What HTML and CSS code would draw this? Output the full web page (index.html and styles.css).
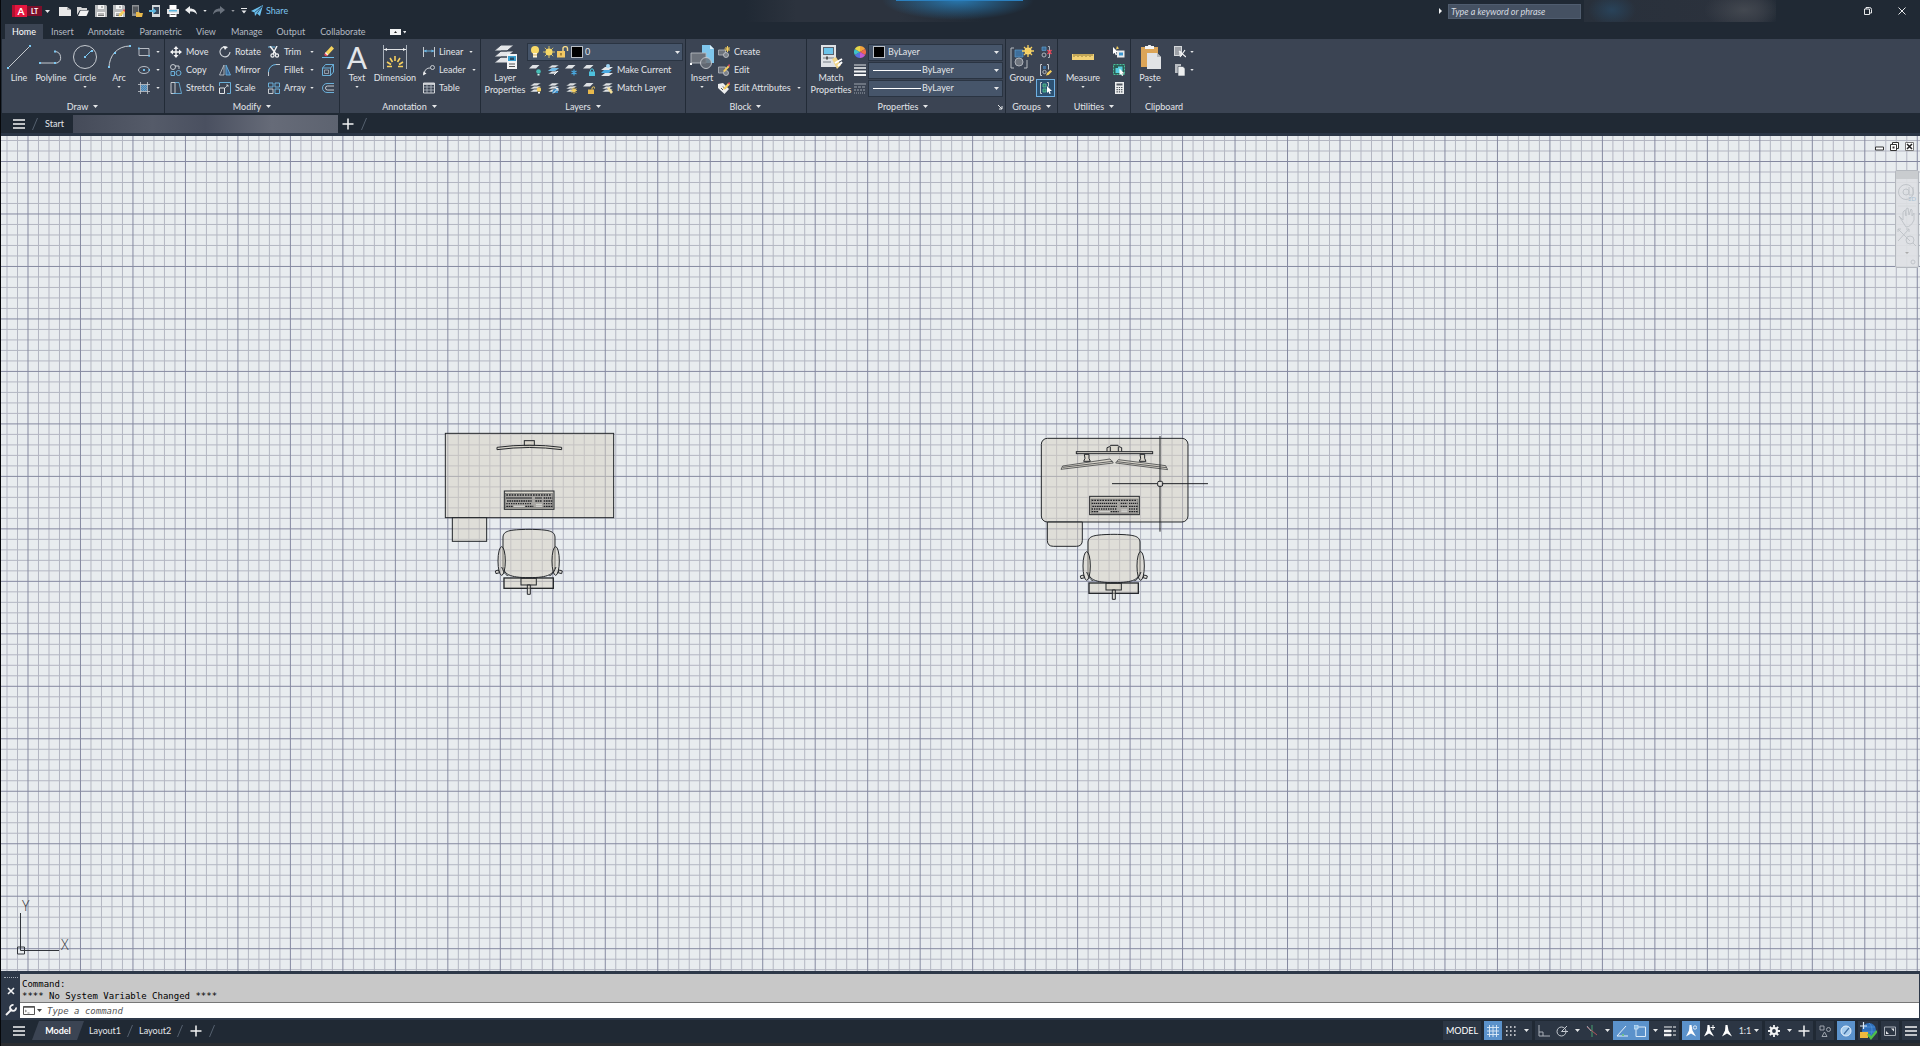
FILE: index.html
```html
<!DOCTYPE html>
<html lang="en">
  <head>
    <title>AutoCAD LT</title>
    <meta charset="utf-8" />
    <meta name="viewport" content="width=device-width" />
    <link rel="stylesheet" href="styles.css">
    <script src="grid.js" defer></script>
  </head>

  <body>
    <!-- icon sprite -->
    <svg class="sprite" aria-hidden="true">
      <symbol id="i-down" viewBox="0 0 5 3"><path d="M0 0h5L2.5 3z" fill="#e6e8ea" /></symbol>
      <symbol id="i-burger" viewBox="0 0 12 12"><path d="M0 2h12M0 6h12M0 10h12" stroke="#f2f3f4" stroke-width="1.6" /></symbol>
      <symbol id="i-plus" viewBox="0 0 12 12"><path d="M6 .5v11M.5 6h11" stroke="#f2f3f4" stroke-width="1.5" /></symbol>
      <symbol id="i-slash" viewBox="0 0 6 12"><path d="M.5 12L5.5 0" stroke="#55606f" /></symbol>

      <symbol id="i-new" viewBox="0 0 12 12"><path d="M0 2h8l4 3v6H0z" fill="#e9e9e9" /><path d="M8 2v3h4z" fill="#aaa" /></symbol>
      <symbol id="i-open" viewBox="0 0 12 12"><path d="M0 10V2h4l1 1h5v2H3z" fill="#d7d7d7" /><path d="M3.500 5.500H12L9.500 11H1z" fill="#f2f2f2" /></symbol>
      <symbol id="i-save" viewBox="0 0 12 12"><path d="M0 0h11l1 1v11H0z" fill="#b9bbbd" /><path d="M3 0h6v4H3zM2 7h8v5H2z" fill="#f4f4f4" /><path d="M7 1v2M3 9h6M3 10.500h6" stroke="#555" stroke-width=".8" /></symbol>
      <symbol id="i-saveas" viewBox="0 0 12 12"><use href="#i-save" /><path d="M5.500 11.500l1-3L10.500 5 12 7 8 11z" fill="#f5cf5f" /><path d="M10 5.500l1-1.500 1 1v2z" fill="#e8485a" /></symbol>
      <symbol id="i-webopen" viewBox="0 0 12 12"><path d="M1 0h7v11H1z" fill="#8d9093" /><path d="M2 1.500h5v7H2z" fill="#55595e" /><path d="M5 7h3l1 1h3l-1 4H5z" fill="#e8b94c" /></symbol>
      <symbol id="i-websave" viewBox="0 0 12 12"><path d="M3 0h8v12H3z" fill="#d4d7d9" /><path d="M4.500 2H10v7H4.500z" fill="#39485a" /><path d="M0 5h4V3l3.500 3L4 9V7H0z" fill="#5cb6dd" /></symbol>
      <symbol id="i-print" viewBox="0 0 12 12"><path d="M2.500 0h7v4h-7z" fill="#fff" /><path d="M0 4h12v5H0z" fill="#e1e3e5" /><path d="M2 5h8v1.500H2z" fill="#5cb6dd" /><path d="M2.500 8h7v4h-7z" fill="#fff" /><path d="M3.500 9.500h5" stroke="#666" /></symbol>
      <symbol id="i-undo" viewBox="0 0 12 12"><path d="M0 5l5-4v2.500c4 0 6.500 2 7 6C10 7 8 6.500 5 6.500V9z" fill="#eceeef" /></symbol>
      <symbol id="i-redo" viewBox="0 0 12 12"><path d="M12 5L7 1v2.500c-4 0-6.500 2-7 6C2 7 4 6.500 7 6.500V9z" fill="#6a727d" /></symbol>
      <symbol id="i-custom" viewBox="0 0 6 6"><path d="M0 .5h6" stroke="#e6e8ea" /><path d="M.5 2.500h5L3 5.500z" fill="#e6e8ea" /></symbol>
      <symbol id="i-plane" viewBox="0 0 12 12"><path d="M0 6L12 0 9 11 6 8.500 4 11 3.500 7.500z" fill="#6cc1ee" /><path d="M3.500 7.500L11 1.500 6 8.500" fill="none" stroke="#25405a" stroke-width=".8" /></symbol>

      <symbol id="i-line" viewBox="0 0 24 24"><path d="M1 23L23 1" stroke="#d5d9de" stroke-width=".9" /><path d="M0 22h2v2H0zM22 0h2v2h-2z" fill="#7cc8f2" /></symbol>
      <symbol id="i-polyline" viewBox="0 0 24 24"><path d="M0 18h18a6 6 0 0 0-2-11.500" fill="none" stroke="#d5d9de" stroke-width=".9" /><path d="M0 17h2v2H0zM15 5.500h2v2h-2zM15 17h2v2h-2z" fill="#7cc8f2" /></symbol>
      <symbol id="i-circle" viewBox="0 0 24 24"><circle cx="12" cy="12" r="11.500" fill="none" stroke="#d5d9de" stroke-width=".9" /><path d="M12 12l7-7" stroke="#7cc8f2" /><path d="M11 11h2v2h-2zM18 5h2v2h-2z" fill="#7cc8f2" /></symbol>
      <symbol id="i-arc" viewBox="0 0 24 24"><path d="M2 23C2 11 10 1 23 1" fill="none" stroke="#d5d9de" stroke-width=".9" /><path d="M1 21h2v2H1zM7 7h2v2H7zM22 0h2v2h-2z" fill="#7cc8f2" /></symbol>
      <symbol id="i-rect" viewBox="0 0 12 12"><path d="M1 2.500h10v7H1z" fill="none" stroke="#c5cad1" stroke-width=".9" /><path d="M0 1.500h1.700v1.700H0zM10.300 9h1.700v1.700h-1.700z" fill="#6fbbe8" /></symbol>
      <symbol id="i-ellipse" viewBox="0 0 12 12"><ellipse cx="6" cy="6" rx="5.500" ry="3.500" fill="none" stroke="#c5cad1" stroke-width=".9" /><path d="M5 5h2v2H5zM10.500 5H12v2h-1.500z" fill="#6fbbe8" /></symbol>
      <symbol id="i-hatch" viewBox="0 0 12 12"><path d="M3 3h6v6H3z" fill="#4d7ea8" /><path d="M3 5l2-2M3 7l4-4M3 9l6-6M5 9l4-4M7 9l2-2" stroke="#8bc8ee" stroke-width=".5" /><path d="M2.500 0v12M9.500 0v12M0 2.500h12M0 9.500h12" stroke="#c5cad1" stroke-width=".8" /></symbol>

      <symbol id="i-move" viewBox="0 0 12 12"><path d="M6 1v10M1 6h10" stroke="#f2f3f4" stroke-width="1.400" /><path d="M3.500 3L6 0l2.500 3zM3.500 9L6 12l2.500-3zM3 3.500L0 6l3 2.500zM9 3.500L12 6 9 8.500z" fill="#f2f3f4" /></symbol>
      <symbol id="i-copy" viewBox="0 0 12 12"><g fill="none" stroke="#d5d9de" stroke-width=".9"><circle cx="3" cy="3" r="2.500" /><path d="M5 2h4v3" /><path d="M1 7.500h3.500v4H1z" stroke="#6fbbe8" /><circle cx="8.500" cy="9" r="2.500" stroke="#6fbbe8" /></g></symbol>
      <symbol id="i-stretch" viewBox="0 0 12 12"><path d="M1 .5h4v11H1z" fill="none" stroke="#d5d9de" stroke-width=".9" /><path d="M5 .5h4l2.500 11H3" fill="none" stroke="#6fbbe8" stroke-width=".8" /></symbol>
      <symbol id="i-rotate" viewBox="0 0 12 12"><path d="M8.500 1.500A5 5 0 1 0 11 6" fill="none" stroke="#d5d9de" stroke-width="1.100" /><path d="M4 0l4.500 1L6 4z" fill="#f2f3f4" /></symbol>
      <symbol id="i-mirror" viewBox="0 0 12 12"><path d="M5 1v10H.5z" fill="none" stroke="#b8bfc8" stroke-width=".9" /><path d="M7 1v10h4.500z" fill="#39679a" stroke="#6fbbe8" stroke-width=".8" /></symbol>
      <symbol id="i-scale" viewBox="0 0 12 12"><path d="M.5 6h5v5.500h-5z" fill="none" stroke="#e3e5e8" /><path d="M.5 4V.5h11v11H8" fill="none" stroke="#6fbbe8" stroke-width=".9" /><path d="M6 6l3-3M9 5V3H7" fill="none" stroke="#e3e5e8" stroke-width=".7" /></symbol>
      <symbol id="i-trim" viewBox="0 0 12 12"><path d="M0 1h7" stroke="#6fbbe8" /><path d="M2 0l6 8M9 0L5 8" stroke="#f2f3f4" stroke-width="1.500" /><g fill="none" stroke="#f2f3f4" stroke-width="1.200"><circle cx="4.500" cy="9.500" r="1.600" /><circle cx="9" cy="9.500" r="1.600" /></g></symbol>
      <symbol id="i-fillet" viewBox="0 0 12 12"><path d="M.5 12V8M8 .5h4" stroke="#d5d9de" stroke-width=".9" /><path d="M.5 8A7.500 7.500 0 0 1 8 .5" fill="none" stroke="#6fbbe8" /></symbol>
      <symbol id="i-array" viewBox="0 0 12 12"><g fill="none" stroke="#6fbbe8" stroke-width=".9"><path d="M.5 1h4.500v4H.5zM7 1h4.500v4H7z" /><path d="M7 7h4.500v4.500H7z" /></g><path d="M.5 7H5v4.500H.5z" fill="none" stroke="#d5d9de" stroke-width=".9" /></symbol>
      <symbol id="i-erase" viewBox="0 0 12 12"><path d="M0 11.500h12" stroke="#6fbbe8" /><path d="M3.500 6.500L9.500 0 12 2.500 6 9z" fill="#f5d35d" /><path d="M3.500 6.500L6 9l-1 1c-1 1-3.500-1-2.500-2.300z" fill="#e8485a" /><path d="M3.300 6.700l2.500 2.500" stroke="#fff" stroke-width="1.200" /></symbol>
      <symbol id="i-explode" viewBox="0 0 12 12"><path d="M.5 4h8v7.500h-8zM.5 4L3.500.5h8V8l-3 3.500M8.500 4l3-3.500" fill="none" stroke="#6fbbe8" stroke-width=".9" /><path d="M2.500 6h4v3.500h-4z" fill="none" stroke="#b8bfc8" stroke-width=".7" /></symbol>
      <symbol id="i-offset" viewBox="0 0 12 12"><path d="M12 1.500H5a4.500 4.500 0 0 0 0 9h7" fill="none" stroke="#6fbbe8" stroke-width=".9" /><path d="M12 4H5.500a2 2 0 0 0 0 4H12" fill="none" stroke="#d5d9de" stroke-width=".9" /></symbol>

      <symbol id="i-dim" viewBox="0 0 24 24"><path d="M.5 0v24M23.500 0v24" stroke="#b8bfc8" stroke-width=".9" /><path d="M1 4.500h22" stroke="#f2f3f4" stroke-width=".9" /><path d="M1 4.500L4 3v3zM23 4.500L20 3v3z" fill="#f2f3f4" /><path d="M12 11v5M7 13l2.500 4M17 13l-2.500 4M4 17l4 2.500M20 17l-4 2.500M4 21.500h5M15 21.500h5" stroke="#f5cf5f" stroke-width="1.600" /></symbol>
      <symbol id="i-linear" viewBox="0 0 12 12"><path d="M.5 1v10M11.500 1v10" stroke="#d5d9de" stroke-width=".9" /><path d="M1 5h10" stroke="#6fbbe8" stroke-width=".9" /><path d="M1 5l2.500-1.500v3zM11 5L8.500 3.500v3z" fill="#6fbbe8" /></symbol>
      <symbol id="i-leader" viewBox="0 0 12 12"><path d="M1 10c1-5 3-6 6.500-6" fill="none" stroke="#d5d9de" /><circle cx="9.500" cy="3.500" r="2" fill="none" stroke="#d5d9de" stroke-width=".9" /><path d="M0 11.500l.5-4 3 2z" fill="#f2f3f4" /></symbol>
      <symbol id="i-table" viewBox="0 0 12 12"><path d="M.5 1h11v10H.5z" fill="none" stroke="#e3e5e8" stroke-width=".9" /><path d="M.5 2h11" stroke="#e3e5e8" stroke-width="1.600" /><path d="M.5 5h11M.5 8h11M4 2v9M8 2v9" stroke="#b8bfc8" stroke-width=".8" /></symbol>

      <symbol id="i-stack" viewBox="0 0 12 12"><path d="M5 1h7L8 4H1zM5 4h7L8 7H1zM5 7h7l-4 3H1z" fill="#dfe2e5" stroke="#3b4453" stroke-width=".5" /></symbol>
      <symbol id="i-one" viewBox="0 0 12 12"><path d="M3.500 1h7L7 4.500H0z" fill="#dfe2e5" /></symbol>
      <symbol id="i-layerprops" viewBox="0 0 24 24"><path d="M8 0h13l-7 6H1zM8 6h13l-7 6H1zM8 12h13l-7 6H1z" fill="#e3e5e8" stroke="#3b4453" /><path d="M14 9h10v15H14z" fill="#f2f3f4" /><path d="M15 11h8v5h-8z" fill="#3aa0cf" /><path d="M17 12.500h4v2.500h-4z" fill="#274b66" /><path d="M16 19h6M16 21.500h6" stroke="#555" /></symbol>
      <symbol id="i-l1" viewBox="0 0 12 12"><use href="#i-one" /><circle cx="9.500" cy="7.500" r="2.300" fill="#48c0b8" /><path d="M8.500 10h2v1.500h-2z" fill="#d5f3ef" /></symbol>
      <symbol id="i-l2" viewBox="0 0 12 12"><use href="#i-stack" /><path d="M5 4h7L8 7H1z" fill="#6fbbe8" /><path d="M7 11l4-4" stroke="#f2f3f4" /></symbol>
      <symbol id="i-l3" viewBox="0 0 12 12"><use href="#i-one" /><path d="M9 5.500v6M6.500 7l5 3M11.500 7l-5 3" stroke="#4aa9e0" stroke-width="1.200" /></symbol>
      <symbol id="i-l4" viewBox="0 0 12 12"><use href="#i-one" /><path d="M6 7.500h6V12H6z" fill="#4ec0dc" /><path d="M7.500 7.500V6c0-1.500 3-1.500 3 0v1.500" fill="none" stroke="#4ec0dc" /></symbol>
      <symbol id="i-l5" viewBox="0 0 12 12"><use href="#i-stack" /><circle cx="10" cy="7.500" r="2.200" fill="#f5cf5f" /><path d="M9 10h2v1.500H9z" fill="#fff" /></symbol>
      <symbol id="i-l6" viewBox="0 0 12 12"><use href="#i-stack" /><path d="M6 8l5-3v6H5z" fill="#3d8fc9" /><path d="M6 11.500l5-5M11 9V6.500H8.500" fill="none" stroke="#f2f3f4" /></symbol>
      <symbol id="i-l7" viewBox="0 0 12 12"><use href="#i-stack" /><circle cx="9" cy="8.500" r="1.800" fill="#f5cf5f" /><path d="M9 5v7M5.500 8.500h7M6.500 6l5 5M11.500 6l-5 5" stroke="#f5cf5f" stroke-width=".8" /></symbol>
      <symbol id="i-l8" viewBox="0 0 12 12"><use href="#i-one" /><path d="M5 7.500h6V12H5z" fill="#e8b94c" /><path d="M9 7.500V6c0-1.500 3-1.500 3 0v1" fill="none" stroke="#f5cf5f" /></symbol>
      <symbol id="i-makecur" viewBox="0 0 12 12"><path d="M4 3h8L8 6H0zM4 9h8l-4 3H0z" fill="#e3e5e8" /><path d="M3 6h8l-3 3H0z" fill="#4aa9e0" /><circle cx="7" cy="2" r="2" fill="#9ed4f4" /></symbol>
      <symbol id="i-matchlay" viewBox="0 0 12 12"><use href="#i-stack" /><path d="M6 6.500l2-1.500 4 5-2 2z" fill="#f3df9c" /></symbol>
      <symbol id="i-bulb" viewBox="0 0 12 12"><circle cx="6" cy="4" r="4" fill="#f8d968" /><path d="M4 7h4v4.500H4z" fill="#fdf6dc" /><path d="M4 9h4" stroke="#b98b2a" stroke-width=".7" /></symbol>
      <symbol id="i-sun" viewBox="0 0 12 12"><circle cx="6" cy="6" r="3.500" fill="#f8d968" /><path d="M6 0v12M0 6h12M1.800 1.800l8.400 8.400M10.200 1.800l-8.400 8.400" stroke="#f8d968" stroke-width=".8" /></symbol>
      <symbol id="i-unlock" viewBox="0 0 12 12"><path d="M0 5h8v6.500H0z" fill="#f2c864" /><path d="M6 5V2.500c0-2.500 4.500-2.500 4.500 0V5" fill="none" stroke="#f5d98a" stroke-width="1.400" /><path d="M4 7v2.500" stroke="#5a4310" /></symbol>

      <symbol id="i-insert" viewBox="0 0 24 24"><path d="M12 0h8l4 4v14H12z" fill="#7fc6ec" /><path d="M20 0v4h4z" fill="#d9f0fb" /><path d="M1 8h15v10H1z" fill="#6c727b" stroke="#b6bac0" stroke-width=".9" /><circle cx="16" cy="18" r="5.500" fill="#6c727b" fill-opacity=".8" stroke="#c6cacf" stroke-width=".9" /><path d="M0 18h2v2H0z" fill="#fff" /></symbol>
      <symbol id="i-create" viewBox="0 0 12 12"><path d="M.5 4h7v5h-7z" fill="#6c727b" stroke="#b6bac0" stroke-width=".8" /><circle cx="8" cy="9" r="2.500" fill="#7b8189" stroke="#c6cacf" stroke-width=".8" /><path d="M9.500 0v6M6.500 3h6M7.500 1l4 4M11.500 1l-4 4" stroke="#f5cf5f" stroke-width="1" /></symbol>
      <symbol id="i-edit" viewBox="0 0 12 12"><path d="M.5 3h7v6h-7z" fill="#6c727b" stroke="#b6bac0" stroke-width=".8" /><circle cx="8" cy="9" r="2.500" fill="#7b8189" stroke="#c6cacf" stroke-width=".8" /><path d="M5 7l5-5.500 1.500 1.500-5 5z" fill="#f5cf5f" /><path d="M10 1.500L11 0l1 1-.5 2z" fill="#e8485a" /></symbol>
      <symbol id="i-attr" viewBox="0 0 12 12"><path d="M0 2l5-1 6 6-4.500 5L0 6z" fill="#eceeef" /><path d="M3 6l2 2M5 4.500l2.500 2.500" stroke="#555" /><path d="M5 7l5-6 2 1.500-5 5z" fill="#f5cf5f" /><path d="M10 1.500L11 0l1 1-.5 2z" fill="#e8485a" /></symbol>

      <symbol id="i-matchprop" viewBox="0 0 24 24"><path d="M2 0h15v22H2z" fill="#dfe2e5" /><path d="M4 2h11v8H4z" fill="#5a6370" /><path d="M5 3h9v6H5z" fill="#6cc4ea" /><path d="M4 13h11M4 17h8" stroke="#777d85" stroke-width="1.200" /><path d="M7 11.500h2v3H7z" fill="#555" /><path d="M13 14l4-2 5 8-4 4z" fill="#f1d68a" /><path d="M16 18l7-4M19 21l4-4" stroke="#fff" stroke-width="2" /></symbol>
      <symbol id="i-wheel" viewBox="0 0 12 12"><path d="M6 6V0a6 6 0 0 1 5.200 3z" fill="#f3a33c" /><path d="M6 6l5.200-3a6 6 0 0 1 0 6z" fill="#f06a4a" /><path d="M6 6l5.200 3A6 6 0 0 1 6 12z" fill="#c25ad2" /><path d="M6 6v6A6 6 0 0 1 .8 9z" fill="#5a6fe0" /><path d="M6 6L.8 9a6 6 0 0 1 0-6z" fill="#3fc1c9" /><path d="M6 6L.8 3A6 6 0 0 1 6 0z" fill="#e8d84a" /></symbol>
      <symbol id="i-weight" viewBox="0 0 12 12"><path d="M0 1h12" stroke="#f2f3f4" stroke-width=".9" /><path d="M0 4h12" stroke="#f2f3f4" stroke-width="1.500" /><path d="M0 7.500h12" stroke="#f2f3f4" stroke-width="2" /><path d="M0 11h12" stroke="#f2f3f4" stroke-width="2" /></symbol>
      <symbol id="i-ltype" viewBox="0 0 12 12"><g stroke="#a9b0b9" stroke-width=".9"><path d="M0 2h12" /><path d="M0 5h12" stroke-dasharray="3 1" /><path d="M0 8h12" stroke-dasharray="2 1" /><path d="M0 11h12" stroke-dasharray="1 1" /></g></symbol>
      <symbol id="i-launch" viewBox="0 0 6 6"><path d="M1 1l4 4M5 2v3H2" fill="none" stroke="#e6e8ea" /></symbol>

      <symbol id="i-group" viewBox="0 0 24 24"><path d="M4 3H1v20h3M14 23h3v-8" fill="none" stroke="#b6bac0" /><path d="M5 5h8v7H5z" fill="#3f6f9c" stroke="#5a9ccc" stroke-width=".7" /><circle cx="9" cy="17" r="4" fill="#70767f" stroke="#aeb3ba" /><circle cx="18" cy="6" r="3.500" fill="#fbe08a" /><path d="M18 0v12M12 6h12M14 2l8 8M22 2l-8 8" stroke="#f5cf5f" stroke-width="1.300" /></symbol>
      <symbol id="i-ungroup" viewBox="0 0 12 12"><path d="M2 1h4v3.500H2z" fill="#3f6f9c" stroke="#5a9ccc" stroke-width=".7" /><circle cx="4" cy="9" r="2" fill="none" stroke="#aeb3ba" /><path d="M8 .5h1.500v11H8" fill="none" stroke="#aeb3ba" /><path d="M7.500 4l4 4M11.500 4l-4 4" stroke="#e8485a" stroke-width="1.500" /></symbol>
      <symbol id="i-grpedit" viewBox="0 0 12 12"><path d="M2 .5H.5v11H2M7 .5h1.500v5" fill="none" stroke="#c6cacf" /><path d="M3 2h3v3H3z" fill="#3f6f9c" /><circle cx="4.500" cy="8" r="1.700" fill="none" stroke="#aeb3ba" /><path d="M6 11.500l1-2.500 3.500-3 1.500 1.500-3.500 3.500z" fill="#f5cf5f" /></symbol>
      <symbol id="i-grpsel" viewBox="0 0 12 12"><path d="M2 .5H.5v11H2M7 .5h1.500v4" fill="none" stroke="#c6cacf" /><path d="M3 2h3v3H3zM3 7h3v3H3z" fill="#2f7c6a" stroke="#58c09c" stroke-width=".8" /><path d="M7 4l5 5H9.700l1 2.500-1.200.5-1-2.500L7 11z" fill="#fff" /></symbol>

      <symbol id="i-measure" viewBox="0 0 24 24"><path d="M1 9h22v6H1z" fill="#f2d277" /><path d="M3 9v3M5 9v2M7 9v3M9 9v2M11 9v3M13 9v2M15 9v3M17 9v2M19 9v3M21 9v2" stroke="#6e5a20" stroke-width=".7" /></symbol>
      <symbol id="i-qsel" viewBox="0 0 12 12"><path d="M4 4.500h7.500v7H4z" fill="#e8eaec" /><path d="M6 6.500h4v3H6z" fill="#3a95cf" /><path d="M4 0l2 2.500-3 1z" fill="#f5cf5f" /><path d="M0 1l5 5-2 .2 1 2.500-1.300.5-1-2.500L0 8z" fill="#fff" /></symbol>
      <symbol id="i-selall" viewBox="0 0 12 12"><path d="M.5.500h11v10H.5z" fill="#2b5f55" stroke="#48c09a" stroke-dasharray="2 1" /><path d="M2.500 4h5v5h-5zM5 2.500h4.500V7H5z" fill="#58cfe0" /><path d="M6.500 4.500l5 5H9.200l1 2-1.200.5-1-2-1.500 1z" fill="#fff" /></symbol>
      <symbol id="i-calc" viewBox="0 0 12 12"><path d="M2 0h9v12H2z" fill="#eceeef" /><path d="M3.500 1.500h6v2h-6z" fill="#555b63" /><path d="M3.500 5.500h6M3.500 7.700h6M3.500 9.900h6" stroke="#444a52" stroke-width="1.200" stroke-dasharray="1.300 1" /></symbol>
      <symbol id="i-paste" viewBox="0 0 24 24"><path d="M3 2h17v20H3z" fill="#dca558" /><path d="M7 1h3c0-2 3-2 3 0h3v3H7z" fill="#f4f5f6" /><path d="M9 8h10l4 4v12H9z" fill="#e1e3e6" /><path d="M19 8v4h4z" fill="#b5b9be" /></symbol>
      <symbol id="i-cut" viewBox="0 0 12 12"><path d="M0 0h8v10H0z" fill="#d5d8db" /><path d="M1 2h6M1 4h6M1 6h4M1 8h4" stroke="#59606a" stroke-width=".9" /><path d="M5 5l7 6M11 4l-5 7" stroke="#f2f3f4" stroke-width="1.200" /></symbol>
      <symbol id="i-copyclip" viewBox="0 0 12 12"><path d="M1 0h6v9H1z" fill="#b9bdc2" /><path d="M4 2.500h5l2 2V12H4z" fill="#eceeef" stroke="#3b4453" stroke-width=".6" /></symbol>

      <!-- status bar -->
      <symbol id="s-grid" viewBox="0 0 12 12"><path d="M2.500 0v12M6 0v12M9.500 0v12M0 2.500h12M0 6h12M0 9.500h12" stroke="#dcebf8" stroke-width=".9" /></symbol>
      <symbol id="s-dots" viewBox="0 0 12 12"><path d="M1 2h10M1 6h10M1 10h10" stroke="#e3e5e8" stroke-width="1.600" stroke-dasharray="1.600 2.400" /></symbol>
      <symbol id="s-ortho" viewBox="0 0 12 12"><path d="M1 0v11h11M1 7h4v4" fill="none" stroke="#aab0b9" /></symbol>
      <symbol id="s-polar" viewBox="0 0 12 12"><circle cx="5.500" cy="6.500" r="4.500" fill="none" stroke="#c5cad1" /><path d="M5.500 6.500H12M5.500 6.500L11 1" stroke="#c5cad1" /></symbol>
      <symbol id="s-iso" viewBox="0 0 12 12"><path d="M6 0v12" stroke="#47a070" /><path d="M1 2l10 8" stroke="#b2565e" /><path d="M1 1l4 5" stroke="#9aa1ab" /></symbol>
      <symbol id="s-track" viewBox="0 0 12 12"><path d="M12 11H1L10 1" fill="none" stroke="#e6f0fa" /><path d="M6 9h2v2H6z" fill="#6ec28b" /></symbol>
      <symbol id="s-snap" viewBox="0 0 12 12"><path d="M2 2h9.500v9.500H2z" fill="none" stroke="#dcebf8" /><path d="M0 0h4v4H0z" fill="#8fc2ea" stroke="#dcebf8" stroke-width=".7" /></symbol>
      <symbol id="s-lw" viewBox="0 0 12 12"><path d="M0 2h8M0 6h8M0 10h8M9 2h3M9 6h3M9 10h3" stroke="#f2f3f4" stroke-width="1.200" /><path d="M0 6h7" stroke="#f2f3f4" stroke-width="2.500" /><path d="M0 10h7" stroke="#f2f3f4" stroke-width="2.500" /></symbol>
      <symbol id="s-ann" viewBox="0 0 12 12"><path d="M4.500 0h2l1 5.500 3.500 6-5-3-5 3 3-6z" fill="#fff" /></symbol>
      <symbol id="s-ann1" viewBox="0 0 12 12"><use href="#s-ann" /><circle cx="10" cy="2.500" r="1.700" fill="none" stroke="#fff" stroke-width=".8" /></symbol>
      <symbol id="s-ann2" viewBox="0 0 12 12"><use href="#s-ann" /><path d="M10 0v5M7.500 2.500h4.500" stroke="#fff" /></symbol>
      <symbol id="s-gear" viewBox="0 0 12 12"><circle cx="6" cy="6" r="3" fill="none" stroke="#f2f3f4" stroke-width="2.200" /><path d="M6 0v2.500M6 9.500V12M0 6h2.500M9.500 6H12M1.800 1.800l1.700 1.700M8.500 8.500l1.700 1.700M10.200 1.800L8.500 3.500M3.500 8.500l-1.700 1.700" stroke="#f2f3f4" stroke-width="1.800" /></symbol>
      <symbol id="s-isolate" viewBox="0 0 12 12"><path d="M1 1h4v4H1zM3 11.500L5.500 7 8 11.500z" fill="none" stroke="#aab0b9" stroke-width=".9" /><circle cx="9.500" cy="4.500" r="2" fill="none" stroke="#aab0b9" stroke-width=".9" /></symbol>
      <symbol id="s-perf" viewBox="0 0 12 12"><circle cx="6" cy="6" r="5" fill="#a7cdee" stroke="#e6f0fa" /><path d="M4 9l5-6" stroke="#3f6ea3" stroke-width="1.200" /></symbol>
      <symbol id="s-sync" viewBox="0 0 18 18"><circle cx="10" cy="8" r="7" fill="#2f6fba" /><path d="M10 1c4 3 4 11 0 14M4 5h12M3 10h14" fill="none" stroke="#4f93d8" stroke-width=".8" /><path d="M1 4h7M4.500 0v7" stroke="#dcebf8" stroke-width="1.200" /><path d="M1 10h8v6H1z" fill="#efb93e" /><path d="M9 12l3 4 6-7" fill="none" stroke="#4fbf4a" stroke-width="2.400" /></symbol>
      <symbol id="s-clean" viewBox="0 0 12 12"><path d="M.5 2h11v8.500H.5z" fill="none" stroke="#aab0b9" /><path d="M7 3.500h3v3zM5 9H2V6z" fill="#e3e5e8" /></symbol>

      <!-- furniture blocks, three units to a screen pixel -->
      <symbol id="b-chair" viewBox="0 0 210 200" overflow="visible">
        <g class="block">
          <path d="M24 24C26 6 40 2 102 1c62 1 76 5 78 23v84c0 28-20 38-78 38s-78-10-78-38z" />
          <ellipse cx="20" cy="96" rx="11" ry="43" />
          <ellipse cx="182" cy="96" rx="11" ry="43" />
          <path d="M1 126l9-3 4 8-11 3zM202 126l-9-3-4 8 11 3z" />
          <path d="M20 114c8 20 14 26 20 26M183 114c-8 20-14 26-20 26" fill="none" />
          <rect x="27" y="147" width="148" height="31" stroke-width="4" />
          <rect x="78" y="148" width="46" height="20" />
          <path d="M97 168h9v28h-9z" />
        </g>
      </symbol>
      <symbol id="b-keyboard" viewBox="0 0 151 57" overflow="visible">
        <g class="block">
          <rect x="1" y="1" width="149" height="55" />
          <rect x="5" y="9" width="141" height="43" fill="#77787a" stroke-width="1" />
          <g fill="none" stroke="#202225" stroke-width="4">
            <path d="M7 13h136" stroke-dasharray="5 3" />
            <path d="M7 22h78M94 22h20M119 22h26" stroke-dasharray="4 2" />
            <path d="M9 31h74M94 31h20M119 31h26" stroke-dasharray="5 2" />
            <path d="M7 39h74M119 39h26" stroke-dasharray="4 3" />
            <path d="M7 47h20M64 47h24M119 47h26" stroke-dasharray="5 2" />
          </g>
          <path d="M30 47h32M96 42h18M96 47h18" stroke="#d8d8d4" stroke-width="3" />
        </g>
      </symbol>
    </svg>

    <header class="titlebar">
      <button class="app-button" aria-label="Application menu">
        <span class="logo-a">A</span><span class="logo-lt">LT</span>
        <svg class="down"><use href="#i-down" /></svg>
      </button>
      <div class="quick">
        <button aria-label="New"><svg><use href="#i-new" /></svg></button>
        <button aria-label="Open"><svg><use href="#i-open" /></svg></button>
        <button aria-label="Save"><svg><use href="#i-save" /></svg></button>
        <button aria-label="Save as"><svg><use href="#i-saveas" /></svg></button>
        <button aria-label="Open from web"><svg><use href="#i-webopen" /></svg></button>
        <button aria-label="Save to web"><svg><use href="#i-websave" /></svg></button>
        <button aria-label="Plot"><svg><use href="#i-print" /></svg></button>
        <button aria-label="Undo"><svg><use href="#i-undo" /></svg></button>
        <svg class="tiny"><use href="#i-down" /></svg>
        <button aria-label="Redo"><svg><use href="#i-redo" /></svg></button>
        <svg class="tiny dim"><use href="#i-down" /></svg>
        <button aria-label="Customize"><svg class="custom"><use href="#i-custom" /></svg></button>
      </div>
      <button class="share"><svg class="icon"><use href="#i-plane" /></svg>Share</button>
      <div class="title-blur"></div>
      <div class="search">
        <svg class="play" viewBox="0 0 3 6"><path d="M0 0l3 3-3 3z" fill="#f2f3f4" /></svg>
        <input type="text" aria-label="Search" placeholder="Type a keyword or phrase" />
      </div>
      <div class="account-blur"></div>
      <div class="window-buttons">
        <button aria-label="Restore"><svg viewBox="0 0 8 8"><path d="M.5 2h5v5.500h-5zM2 2V.5h3.500q2 0 2 2V6h-2" fill="none" stroke="#e6e8ea" /></svg></button>
        <button aria-label="Close"><svg viewBox="0 0 8 8"><path d="M.5.500l7 7M7.500.500l-7 7" stroke="#e6e8ea" /></svg></button>
      </div>
    </header>

    <nav class="ribbon-tabs">
      <button class="active">Home</button>
      <button>Insert</button>
      <button>Annotate</button>
      <button>Parametric</button>
      <button>View</button>
      <button>Manage</button>
      <button>Output</button>
      <button>Collaborate</button>
      <button class="minimize" aria-label="Minimize ribbon"><svg viewBox="0 0 16 6"><path d="M0 0h11v6H0z" fill="#f2f3f4" /><path d="M4 4l1.500-2L7 4z" fill="#222" /><path d="M13 2h3.500L14.700 4.500z" fill="#e6e8ea" /></svg></button>
    </nav>

    <section class="ribbon">
      <div class="panel draw">
        <div class="tools">
          <button class="big"><svg><use href="#i-line" /></svg>Line</button>
          <button class="big"><svg><use href="#i-polyline" /></svg>Polyline</button>
          <button class="big wide"><svg><use href="#i-circle" /></svg>Circle<svg class="tiny"><use href="#i-down" /></svg></button>
          <button class="big"><svg><use href="#i-arc" /></svg>Arc<svg class="tiny"><use href="#i-down" /></svg></button>
          <div class="col">
            <button class="tool" aria-label="Rectangle"><svg class="icon"><use href="#i-rect" /></svg><svg class="tiny"><use href="#i-down" /></svg></button>
            <button class="tool" aria-label="Ellipse"><svg class="icon"><use href="#i-ellipse" /></svg><svg class="tiny"><use href="#i-down" /></svg></button>
            <button class="tool" aria-label="Hatch"><svg class="icon"><use href="#i-hatch" /></svg><svg class="tiny"><use href="#i-down" /></svg></button>
          </div>
        </div>
        <button class="panel-title">Draw<svg class="down"><use href="#i-down" /></svg></button>
      </div>

      <div class="panel modify">
        <div class="tools">
          <div class="col col-text">
            <button class="tool"><svg class="icon"><use href="#i-move" /></svg>Move</button>
            <button class="tool"><svg class="icon"><use href="#i-copy" /></svg>Copy</button>
            <button class="tool"><svg class="icon"><use href="#i-stretch" /></svg>Stretch</button>
          </div>
          <div class="col col-text">
            <button class="tool"><svg class="icon"><use href="#i-rotate" /></svg>Rotate</button>
            <button class="tool"><svg class="icon"><use href="#i-mirror" /></svg>Mirror</button>
            <button class="tool"><svg class="icon"><use href="#i-scale" /></svg>Scale</button>
          </div>
          <div class="col col-text">
            <button class="tool split"><svg class="icon"><use href="#i-trim" /></svg>Trim<svg class="tiny"><use href="#i-down" /></svg></button>
            <button class="tool split"><svg class="icon"><use href="#i-fillet" /></svg>Fillet<svg class="tiny"><use href="#i-down" /></svg></button>
            <button class="tool split"><svg class="icon"><use href="#i-array" /></svg>Array<svg class="tiny"><use href="#i-down" /></svg></button>
          </div>
          <div class="col">
            <button class="tool" aria-label="Erase"><svg class="icon"><use href="#i-erase" /></svg></button>
            <button class="tool" aria-label="Explode"><svg class="icon"><use href="#i-explode" /></svg></button>
            <button class="tool" aria-label="Offset"><svg class="icon"><use href="#i-offset" /></svg></button>
          </div>
        </div>
        <button class="panel-title">Modify<svg class="down"><use href="#i-down" /></svg></button>
      </div>

      <div class="panel annotation">
        <div class="tools">
          <button class="big"><span class="letter">A</span>Text<svg class="tiny"><use href="#i-down" /></svg></button>
          <button class="big label-wide"><svg><use href="#i-dim" /></svg>Dimension</button>
          <div class="col">
            <button class="tool"><svg class="icon"><use href="#i-linear" /></svg>Linear<svg class="tiny after"><use href="#i-down" /></svg></button>
            <button class="tool"><svg class="icon"><use href="#i-leader" /></svg>Leader<svg class="tiny after"><use href="#i-down" /></svg></button>
            <button class="tool"><svg class="icon"><use href="#i-table" /></svg>Table</button>
          </div>
        </div>
        <button class="panel-title">Annotation<svg class="down"><use href="#i-down" /></svg></button>
      </div>

      <div class="panel layers">
        <div class="tools">
          <button class="big label-wide"><svg><use href="#i-layerprops" /></svg>Layer<br />Properties</button>
          <div class="col fill">
            <label class="combo">
              <svg class="icon"><use href="#i-bulb" /></svg>
              <svg class="icon"><use href="#i-sun" /></svg>
              <svg class="icon"><use href="#i-unlock" /></svg>
              <span class="swatch"></span>
              <select aria-label="Layer"><option>0</option></select>
              <svg class="down"><use href="#i-down" /></svg>
            </label>
            <div class="row">
              <button class="tool" aria-label="Layer off"><svg class="icon"><use href="#i-l1" /></svg></button>
              <button class="tool" aria-label="Isolate"><svg class="icon"><use href="#i-l2" /></svg></button>
              <button class="tool" aria-label="Freeze"><svg class="icon"><use href="#i-l3" /></svg></button>
              <button class="tool" aria-label="Lock"><svg class="icon"><use href="#i-l4" /></svg></button>
              <button class="tool"><svg class="icon"><use href="#i-makecur" /></svg>Make Current</button>
            </div>
            <div class="row">
              <button class="tool" aria-label="Turn all layers on"><svg class="icon"><use href="#i-l5" /></svg></button>
              <button class="tool" aria-label="Unisolate"><svg class="icon"><use href="#i-l6" /></svg></button>
              <button class="tool" aria-label="Thaw all layers"><svg class="icon"><use href="#i-l7" /></svg></button>
              <button class="tool" aria-label="Unlock"><svg class="icon"><use href="#i-l8" /></svg></button>
              <button class="tool"><svg class="icon"><use href="#i-matchlay" /></svg>Match Layer</button>
            </div>
          </div>
        </div>
        <button class="panel-title">Layers<svg class="down"><use href="#i-down" /></svg></button>
      </div>

      <div class="panel blocks">
        <div class="tools">
          <button class="big"><svg><use href="#i-insert" /></svg>Insert<svg class="tiny"><use href="#i-down" /></svg></button>
          <div class="col">
            <button class="tool"><svg class="icon"><use href="#i-create" /></svg>Create</button>
            <button class="tool"><svg class="icon"><use href="#i-edit" /></svg>Edit</button>
            <button class="tool"><svg class="icon"><use href="#i-attr" /></svg>Edit Attributes<svg class="tiny after"><use href="#i-down" /></svg></button>
          </div>
        </div>
        <button class="panel-title">Block<svg class="down"><use href="#i-down" /></svg></button>
      </div>

      <div class="panel properties">
        <div class="tools">
          <button class="big label-wide"><svg><use href="#i-matchprop" /></svg>Match<br />Properties</button>
          <div class="col fill">
            <div class="row">
              <svg class="icon"><use href="#i-wheel" /></svg>
              <label class="combo"><span class="swatch"></span>
                <select aria-label="Object color"><option>ByLayer</option></select>
                <svg class="down"><use href="#i-down" /></svg></label>
            </div>
            <div class="row">
              <svg class="icon"><use href="#i-weight" /></svg>
              <label class="combo"><span class="stroke"></span>
                <select aria-label="Lineweight"><option>ByLayer</option></select>
                <svg class="down"><use href="#i-down" /></svg></label>
            </div>
            <div class="row">
              <svg class="icon"><use href="#i-ltype" /></svg>
              <label class="combo"><span class="stroke"></span>
                <select aria-label="Linetype"><option>ByLayer</option></select>
                <svg class="down"><use href="#i-down" /></svg></label>
            </div>
          </div>
        </div>
        <div class="title-row">
          <button class="panel-title">Properties<svg class="down"><use href="#i-down" /></svg></button>
          <button class="launcher" aria-label="Properties palette"><svg><use href="#i-launch" /></svg></button>
        </div>
      </div>

      <div class="panel groups">
        <div class="tools">
          <button class="big"><svg><use href="#i-group" /></svg>Group</button>
          <div class="col">
            <button class="tool boxed" aria-label="Ungroup"><svg class="icon"><use href="#i-ungroup" /></svg></button>
            <button class="tool boxed" aria-label="Group edit"><svg class="icon"><use href="#i-grpedit" /></svg></button>
            <button class="tool boxed on" aria-label="Group selection"><svg class="icon"><use href="#i-grpsel" /></svg></button>
          </div>
        </div>
        <button class="panel-title">Groups<svg class="down"><use href="#i-down" /></svg></button>
      </div>

      <div class="panel utilities">
        <div class="tools">
          <button class="big label-wide"><svg><use href="#i-measure" /></svg>Measure<svg class="tiny"><use href="#i-down" /></svg></button>
          <div class="col">
            <button class="tool" aria-label="Quick select"><svg class="icon"><use href="#i-qsel" /></svg></button>
            <button class="tool" aria-label="Select all"><svg class="icon"><use href="#i-selall" /></svg></button>
            <button class="tool" aria-label="Calculator"><svg class="icon"><use href="#i-calc" /></svg></button>
          </div>
        </div>
        <button class="panel-title">Utilities<svg class="down"><use href="#i-down" /></svg></button>
      </div>

      <div class="panel clipboard">
        <div class="tools">
          <button class="big"><svg><use href="#i-paste" /></svg>Paste<svg class="tiny"><use href="#i-down" /></svg></button>
          <div class="col">
            <button class="tool" aria-label="Cut"><svg class="icon"><use href="#i-cut" /></svg><svg class="tiny"><use href="#i-down" /></svg></button>
            <button class="tool" aria-label="Copy clip"><svg class="icon"><use href="#i-copyclip" /></svg><svg class="tiny"><use href="#i-down" /></svg></button>
          </div>
        </div>
        <button class="panel-title">Clipboard</button>
      </div>
    </section>

    <nav class="file-tabs">
      <button class="burger" aria-label="Files"><svg class="icon"><use href="#i-burger" /></svg></button>
      <svg class="slash"><use href="#i-slash" /></svg>
      <button>Start</button>
      <div class="drawing-tab"></div>
      <button aria-label="New drawing"><svg class="icon"><use href="#i-plus" /></svg></button>
      <svg class="slash"><use href="#i-slash" /></svg>
    </nav>

    <main class="model-space">
      <svg class="drawing" id="drawing">
        <path id="grid_minor" />
        <path id="grid_major" />

        <!-- straight desk -->
        <g transform="translate(429 284) scale(0.3333)">
          <g class="block">
            <rect x="46" y="40" width="505" height="253" />
            <rect x="67" y="293" width="103" height="71" />
            <rect x="283" y="62" width="30" height="15" />
            <path d="M201 82Q298 69 395 82v7Q298 76 201 89z" />
          </g>
          <use href="#b-keyboard" x="222" y="212" width="151" height="57" />
          <use href="#b-chair" x="195" y="327" width="210" height="200" />
        </g>

        <!-- rounded desk with two monitors -->
        <g transform="translate(1024 284) scale(0.3333)">
          <g class="block">
            <rect x="49" y="55" width="440" height="251" rx="18" />
            <path d="M67 306h105v55q0 18-18 18H85q-18 0-18-18z" />
            <path d="M246 95V83l8-3 3-4h22l3 4 8 3v12M256 95V80M280 95V80" />
            <rect x="154" y="95" width="229" height="6" />
            <path d="M178 103h14v12l4 9h-20l4-9zM345 103h14v12l4 9h-20l4-9z" />
          </g>
          <g class="block thin">
            <path d="M108 148l5-10 142-21 10 12zM113 142l150-18" />
            <path d="M428 149l-6-12-142-18-8 10zM424 143l-148-18" />
          </g>
          <use href="#b-keyboard" x="193" y="228" width="151" height="57" />
          <use href="#b-chair" x="165" y="342" width="210" height="200" />
          <path class="cross" d="M261 191h136M413 191h136M405 48v135M405 199v136" />
          <rect class="cross" x="398" y="184" width="15" height="15" rx="4" />
        </g>

        <svg class="ucs" y="100%" overflow="visible">
          <path d="M19.500-58v37.500H58M16.500-24h7v7h-7z" fill="none" stroke="#30343a" />
          <text x="21" y="-60">Y</text>
          <text x="60" y="-21">X</text>
        </svg>
      </svg>

      <div class="view-buttons">
        <button aria-label="Minimize drawing"><svg viewBox="0 0 9 9"><path d="M.5 5h8v3h-8z" fill="#fff" stroke="#333" /></svg></button>
        <button aria-label="Restore drawing"><svg viewBox="0 0 9 9"><path d="M.5 2.500h6v6h-6zM2.500 2.500v-2h6v6h-2" fill="#fff" stroke="#333" /><path d="M2.500 4.500h2v2h-2z" fill="#333" /></svg></button>
        <button aria-label="Close drawing"><svg viewBox="0 0 9 9"><path d="M.5.500h8v8h-8z" fill="#fff" stroke="#777" /><path d="M2 2l5 5M7 2L2 7" stroke="#222" stroke-width="1.500" /></svg></button>
      </div>

      <div class="navbar">
        <div class="navbar-head"></div>
        <svg viewBox="0 0 22 88">
          <g fill="none" stroke="#c0c4c9">
            <circle cx="10" cy="13" r="7.500" /><circle cx="10" cy="13" r="3" /><path d="M13 8v8h4V8" />
            <path d="M2 27h18" stroke="#d5d8db" />
            <path d="M3 37l4 4v-8l2-2 1 6v-7l2-1 1 7 2-6 1 1v6l2-3v7q-3 7-8 7z" />
            <path d="M2 50l12 12M13 50L2 62M2 53v-3h3M10 50h3v3" /><circle cx="14" cy="61" r="4" /><path d="M17 64l3 3" />
          </g>
          <text x="12" y="22">2D</text>
          <path d="M9 73h4l-2 2z" fill="#aaa" />
          <circle cx="17" cy="83" r="2" fill="none" stroke="#c0c4c9" />
        </svg>
      </div>
    </main>

    <section class="command">
      <div class="command-side">
        <span class="grip"></span>
        <button aria-label="Close command line"><svg viewBox="0 0 8 8"><path d="M1 1l6 6M7 1L1 7" stroke="#f2f3f4" stroke-width="1.600" /></svg></button>
        <button aria-label="Command settings"><svg class="wrench" viewBox="0 0 12 12"><path d="M1 11l6-6" stroke="#f2f3f4" stroke-width="2" /><path d="M11 3.500A3 3 0 1 1 8.500 1" fill="none" stroke="#f2f3f4" stroke-width="1.800" /></svg></button>
      </div>
      <div class="command-main">
        <pre class="history">Command:
**** No System Variable Changed ****</pre>
        <div class="prompt">
          <svg class="prompt-icon" viewBox="0 0 20 9"><path d="M.5.500h11v8H.5z" fill="#fff" stroke="#555" /><path d="M.5 1h11" stroke="#555" stroke-width="1.500" /><path d="M2 4l1.500 1L2 6M4.500 7h2" fill="none" stroke="#555" stroke-width=".7" /><path d="M14 3h5l-2.500 3z" fill="#444" /></svg>
          <input type="text" aria-label="Command" placeholder="Type a command" />
        </div>
      </div>
    </section>

    <footer class="statusbar">
      <nav class="layout-tabs">
        <button class="burger" aria-label="Layouts"><svg class="icon"><use href="#i-burger" /></svg></button>
        <button class="active">Model</button>
        <button>Layout1</button>
        <svg class="slash"><use href="#i-slash" /></svg>
        <button>Layout2</button>
        <svg class="slash"><use href="#i-slash" /></svg>
        <button class="add" aria-label="New layout"><svg class="icon"><use href="#i-plus" /></svg></button>
        <svg class="slash"><use href="#i-slash" /></svg>
      </nav>
      <div class="status">
        <div class="set"><button class="model">MODEL</button></div>
        <div class="set">
          <button class="on" aria-label="Grid"><svg><use href="#s-grid" /></svg></button>
          <button aria-label="Snap"><svg><use href="#s-dots" /></svg></button>
          <button class="more" aria-label="Snap options"><svg><use href="#i-down" /></svg></button>
        </div>
        <div class="set">
          <button aria-label="Ortho"><svg><use href="#s-ortho" /></svg></button>
          <button aria-label="Polar"><svg><use href="#s-polar" /></svg></button>
          <button class="more" aria-label="Polar options"><svg><use href="#i-down" /></svg></button>
          <button aria-label="Isoplane"><svg><use href="#s-iso" /></svg></button>
          <button class="more" aria-label="Isoplane options"><svg><use href="#i-down" /></svg></button>
          <button class="on" aria-label="Tracking"><svg><use href="#s-track" /></svg></button>
          <button class="on" aria-label="Object snap"><svg><use href="#s-snap" /></svg></button>
          <button class="more" aria-label="Object snap options"><svg><use href="#i-down" /></svg></button>
          <button aria-label="Lineweight"><svg><use href="#s-lw" /></svg></button>
        </div>
        <div class="set">
          <button class="on" aria-label="Annotation visibility"><svg><use href="#s-ann1" /></svg></button>
          <button aria-label="Auto scale"><svg><use href="#s-ann2" /></svg></button>
          <button aria-label="Annotation scale"><svg><use href="#s-ann" /></svg></button>
          <button class="scale">1:1<svg class="down"><use href="#i-down" /></svg></button>
        </div>
        <div class="set">
          <button aria-label="Workspace"><svg><use href="#s-gear" /></svg></button>
          <button class="more" aria-label="Workspace options"><svg><use href="#i-down" /></svg></button>
          <button aria-label="Annotation monitor"><svg><use href="#i-plus" /></svg></button>
        </div>
        <div class="set"><button aria-label="Isolate objects"><svg><use href="#s-isolate" /></svg></button></div>
        <div class="set"><button class="on" aria-label="Graphics performance"><svg><use href="#s-perf" /></svg></button></div>
        <div class="set"><button class="sync" aria-label="Trusted file"><svg><use href="#s-sync" /></svg></button></div>
        <div class="set"><button aria-label="Clean screen"><svg><use href="#s-clean" /></svg></button></div>
        <div class="set"><button aria-label="Customization"><svg><use href="#i-burger" /></svg></button></div>
      </div>
    </footer>
  </body>
</html>
```
FILE: styles.css
```css
* {
  margin: 0;
  padding: 0;
  box-sizing: border-box;
}

body {
  display: flex;
  flex-direction: column;
  height: 100vh;
  overflow: hidden;
  background-color: #202934;
  color: #e2e5e9;
  font-family: "Segoe UI", Lato, "Open Sans", sans-serif;
  font-size: 9px;
  line-height: 12px;
  border-left: 1px solid #05070a;
}

button,
select,
input {
  appearance: none;
  background: none;
  border: none;
  outline: none;
  color: inherit;
  font: inherit;
}

button {
  display: flex;
  align-items: center;
  white-space: nowrap;
  cursor: pointer;
}

svg {
  display: block;
  flex: none;
}

.sprite {
  position: absolute;
  width: 0;
  height: 0;
}

.icon {
  width: 12px;
  height: 12px;
}

.down {
  width: 5px;
  height: 3px;
}

.tiny {
  width: 4px;
  height: 2px;
}

.dim {
  opacity: 0.6;
}

.slash {
  width: 6px;
  height: 12px;
}

/* title bar */
.titlebar {
  display: flex;
  align-items: center;
  height: 22px;
  padding-left: 11px;
}

.app-button {
  gap: 0;
  margin-right: 9px;
  color: white;
  font-weight: bold;
}

.logo-a {
  width: 15px;
  height: 12px;
  background-color: #e5173f;
  border-left: 3px solid #b50f30;
  font-size: 10px;
}

.logo-lt {
  width: 15px;
  height: 10px;
  line-height: 10px;
  margin-right: 3px;
  background-color: #7d0f2b;
  font-size: 7px;
}

.quick {
  display: flex;
  align-items: center;
  gap: 6px;
}

.quick button svg {
  width: 12px;
  height: 12px;
}

.quick button .custom {
  width: 6px;
  height: 6px;
}

.share {
  margin-left: 4px;
  gap: 3px;
  color: #7cc4ee;
}

.title-blur {
  align-self: stretch;
  width: 340px;
  margin-left: auto;
  background:
    linear-gradient(#2b80bf, #2b80bf) 202px 0 / 127px 1px no-repeat,
    radial-gradient(ellipse 76px 20px at 264px 0, #2877ae, transparent),
    linear-gradient(90deg, transparent 15%, #2c333e 30%, #2c333e 60%, transparent 85%);
}

.search {
  display: flex;
  align-items: center;
  gap: 6px;
  margin-left: auto;
}

.play {
  width: 3px;
  height: 6px;
}

.search input {
  width: 133px;
  height: 15px;
  padding-left: 2px;
  background-color: #455162;
  border: 1px solid #505d6f;
  font-style: italic;
}

.search input::placeholder {
  color: #d5dae0;
}

.account-blur {
  align-self: stretch;
  width: 192px;
  margin-left: 3px;
  background:
    radial-gradient(ellipse 24px 16px at 28px 10px, #29435a, transparent),
    radial-gradient(ellipse 40px 20px at 160px 10px, #434850, transparent),
    linear-gradient(90deg, #28303b, #2c323d 90%, transparent);
}

.window-buttons {
  display: flex;
  gap: 26px;
  margin-left: 88px;
  padding-right: 14px;
}

.window-buttons svg {
  width: 8px;
  height: 8px;
}

/* ribbon */
.ribbon-tabs {
  display: flex;
  align-items: flex-end;
  height: 17px;
  padding-left: 4px;
}

.ribbon-tabs button {
  height: 15px;
  padding: 0 7px;
  color: #b4bac3;
}

.ribbon-tabs button:nth-child(even) {
  padding-left: 8px;
}

.ribbon-tabs .active {
  background-color: #3b4453;
  color: white;
}

.ribbon-tabs .minimize {
  margin-left: 10px;
}

.minimize svg {
  width: 16px;
  height: 6px;
}

.ribbon {
  display: flex;
  height: 74px;
  margin-left: 1px;
  background-color: #3b4453;
}

.panel {
  display: flex;
  flex-direction: column;
  flex: none;
  padding: 4px 2px 0 2px;
  border-right: 1px solid #222b37;
}

.tools {
  display: flex;
  height: 57px;
}

.panel-title {
  justify-content: center;
  gap: 5px;
  height: 13px;
}

.draw {
  width: 163px;
  padding-left: 1px;
}

.draw .col {
  margin-left: 3px;
}

.draw .tool {
  gap: 6px;
}

.modify {
  width: 175px;
}

.annotation {
  width: 141px;
  padding-left: 1px;
}

.layers {
  width: 205px;
}

.blocks {
  width: 121px;
  padding-left: 1px;
}

.properties {
  width: 199px;
}

.groups {
  width: 52px;
}

.utilities {
  width: 73px;
}

.clipboard {
  width: 66px;
  border-right: none;
}

.big {
  flex-direction: column;
  width: 32px;
  padding-top: 2px;
  line-height: 12px;
  text-align: center;
}

.big.wide {
  width: 36px;
}

.big.label-wide {
  width: 44px;
}

.big > svg:first-child,
.letter {
  width: 24px;
  height: 24px;
  margin-bottom: 3px;
}

.letter {
  font-size: 30px;
  line-height: 24px;
}

.big .tiny {
  margin-top: 2px;
}

.col {
  display: flex;
  flex-direction: column;
}

.col.fill {
  flex: 1;
  min-width: 0;
}

.row {
  display: flex;
  align-items: center;
}

.tool {
  height: 18px;
  gap: 4px;
}

.col-text {
  width: 49px;
}

.modify .tools {
  padding-left: 3px;
}

.modify .col-text + .col-text + .col-text {
  width: 54px;
}

.split {
  padding-right: 8px;
}

.split .tiny {
  margin-left: auto;
}

.after {
  margin-left: 2px;
}

.annotation .col {
  margin-left: 6px;
}

.layers .row {
  gap: 6px;
  padding-left: 2px;
}

.blocks .big {
  width: 30px;
}

.blocks .col {
  margin-left: 1px;
}

.properties .row {
  gap: 2px;
  height: 18px;
}

.properties .label-wide {
  margin-right: 1px;
}

.combo {
  display: flex;
  align-items: center;
  flex: 1;
  height: 17px;
  padding: 0 3px 0 4px;
  gap: 3px;
  background-color: #46556a;
  border: 1px solid #2a3442;
}

.layers .combo {
  flex: none;
  height: 18px;
  padding: 0 2px 0 1px;
  gap: 2px;
}

.combo select {
  flex: 1;
  min-width: 0;
  height: 14px;
}

.swatch {
  width: 12px;
  height: 12px;
  background-color: black;
  border: 1px solid #b9bec5;
}

.stroke {
  width: 48px;
  height: 1px;
  background-color: white;
}

.stroke + select {
  margin-left: -2px;
}

.title-row {
  display: flex;
}

.title-row .panel-title {
  flex: 1;
}

.launcher svg {
  width: 6px;
  height: 6px;
}

.groups .tools {
  margin-right: -2px;
}

.groups .big {
  width: 28px;
}

.boxed {
  justify-content: center;
  width: 19px;
}

.boxed.on {
  background-color: #2c5172;
  border: 1px solid #6fb1e3;
}

.utilities .tools {
  padding-left: 1px;
}

.utilities .col {
  margin-left: 8px;
}

.clipboard .col {
  margin-left: 7px;
}

.clipboard .big {
  width: 34px;
}

/* drawing tabs */
.file-tabs {
  display: flex;
  align-items: center;
  gap: 7px;
  height: 23px;
  padding: 2px 0 0 12px;
  border-bottom: 3px solid #2b3646;
}

.drawing-tab {
  align-self: stretch;
  width: 265px;
  margin-left: 2px;
  background: linear-gradient(90deg, #454b59, #555b69 30%, #4a5060 50%, #666b78 75%, #5d6370);
}

.file-tabs .drawing-tab + button {
  margin-left: -3px;
}

/* model space */
.model-space {
  position: relative;
  flex: 1;
  min-height: 0;
  background-color: #e8ecef;
}

.drawing {
  width: 100%;
  height: 100%;
}

#grid_minor {
  stroke: #b3b6c2;
}

#grid_major {
  stroke: #8589a0;
}

.block {
  fill: #d6d0c2;
  fill-opacity: 0.5;
  stroke: #24272b;
  stroke-width: 3;
}

.block.thin {
  stroke-width: 2;
}

.cross {
  fill: none;
  stroke: #1f2226;
  stroke-width: 3;
}

.ucs text {
  fill: #30343a;
  font-family: "Open Sans", sans-serif;
  font-size: 14px;
  font-weight: 300;
}

.view-buttons {
  position: absolute;
  top: 6px;
  right: 6px;
  display: flex;
  gap: 6px;
}

.view-buttons svg {
  width: 9px;
  height: 9px;
}

.navbar {
  position: absolute;
  top: 34px;
  right: 1px;
  width: 24px;
  background-color: rgba(222, 224, 227, 0.9);
  border: 1px solid #b4b8be;
  border-radius: 2px;
}

.navbar-head {
  height: 8px;
  background-color: #c9cccf;
}

.navbar svg {
  width: 22px;
  height: 88px;
}

.navbar text {
  fill: #a5bfd2;
  font-size: 6px;
}

/* command line */
.command {
  display: flex;
  height: 49px;
  padding: 3px 1px 2px 0;
  background-color: #2d3848;
}

.command-side {
  display: flex;
  flex-direction: column;
  align-items: center;
  gap: 9px;
  width: 19px;
  padding-top: 3px;
}

.command-side svg {
  width: 8px;
  height: 8px;
}

.command-side .wrench {
  width: 12px;
  height: 12px;
}

.grip {
  width: 14px;
  border-top: 1px dotted #a4abb5;
}

.command-main {
  display: flex;
  flex-direction: column;
  flex: 1;
  font-family: Consolas, "DejaVu Sans Mono", monospace;
}

.history {
  height: 29px;
  padding: 4px 2px;
  background-color: #c8c8c8;
  border-bottom: 1px solid #777;
  color: black;
  font-family: inherit;
}

.prompt {
  display: flex;
  align-items: center;
  flex: 1;
  gap: 4px;
  padding-left: 3px;
  background-color: white;
}

.prompt-icon {
  width: 20px;
  height: 9px;
}

.prompt input {
  flex: 1;
  font-style: italic;
  color: #333;
}

.prompt input::placeholder {
  color: #555;
}

/* status bar */
.statusbar {
  display: flex;
  justify-content: space-between;
  height: 26px;
  padding-top: 1px;
  border-bottom: 3px solid #2b2d31;
}

.layout-tabs {
  display: flex;
  align-items: center;
  gap: 6px;
  height: 19px;
  padding-left: 12px;
}

.layout-tabs .active {
  justify-content: center;
  width: 52px;
  height: 19px;
  margin: 0 -1px 0 1px;
  background-color: #3b4453;
  clip-path: polygon(7px 0, 100% 0, 45px 100%, 0 100%);
  color: white;
  font-weight: bold;
}

.layout-tabs .add {
  margin: 0 1px;
}

.status {
  display: flex;
  gap: 3px;
}

.set {
  display: flex;
}

.status button {
  justify-content: center;
  width: 18px;
  height: 19px;
  background-color: #2c3644;
}

.status button svg {
  width: 12px;
  height: 12px;
}

.status .on {
  background-color: #5b92cb;
}

.status .more {
  width: 12px;
}

.status .more svg,
.status .scale svg {
  width: 5px;
  height: 3px;
}

.status .model {
  width: 38px;
  color: white;
}

.status .scale {
  width: 26px;
  gap: 3px;
}

.status .sync {
  width: 20px;
}

.status .sync svg {
  width: 18px;
  height: 18px;
}
```
FILE: grid.js
```javascript
// grid spacing in pixels, every fifth line is a major one
const SPACING = 10.496;
const ORIGIN_X = 27;
const ORIGIN_Y = 25.5;

function drawGrid() {
  let drawing = document.getElementById("drawing");
  let width = drawing.clientWidth;
  let height = drawing.clientHeight;
  let minor = "";
  let major = "";

  for (let i = -5; ORIGIN_X + i * SPACING < width; i++) {
    let line = `M${ORIGIN_X + i * SPACING} 0V${height}`;
    if (i % 5 === 0) major += line;
    else minor += line;
  }

  for (let i = -5; ORIGIN_Y + i * SPACING < height; i++) {
    let line = `M0 ${ORIGIN_Y + i * SPACING}H${width}`;
    if (i % 5 === 0) major += line;
    else minor += line;
  }

  document.getElementById("grid_minor").setAttribute("d", minor);
  document.getElementById("grid_major").setAttribute("d", major);
}

window.addEventListener("resize", drawGrid);
drawGrid();
```
